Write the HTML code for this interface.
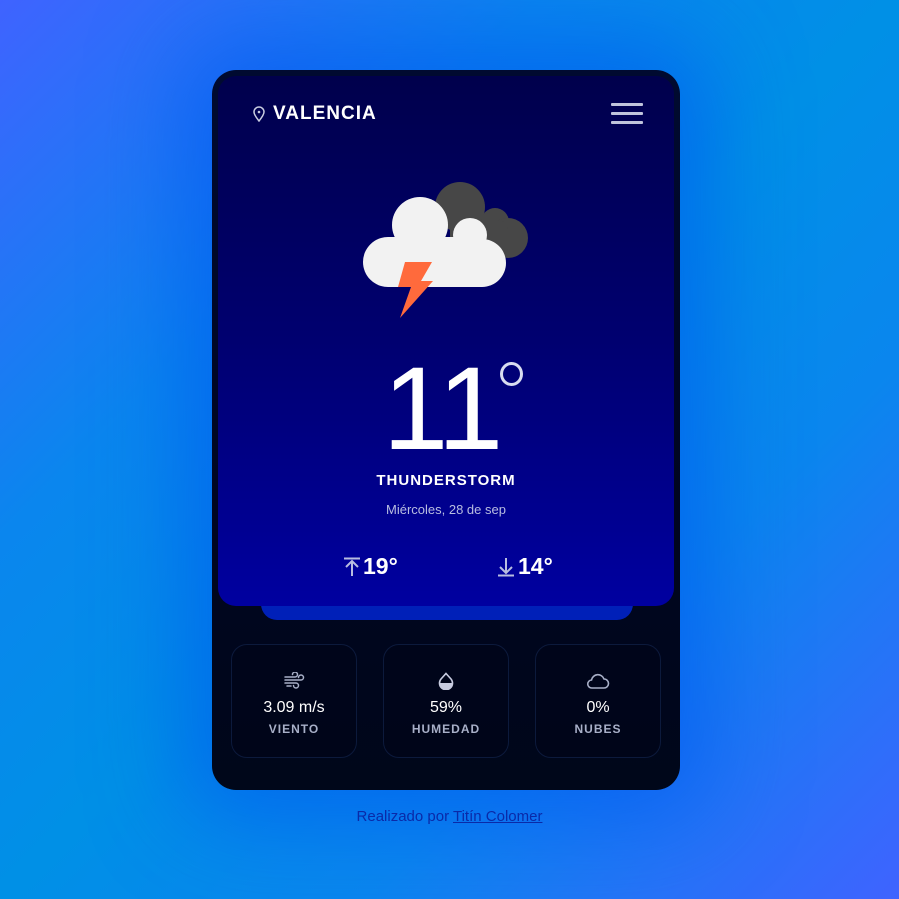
<!DOCTYPE html>
<html><head><meta charset="utf-8"><style>
*{margin:0;padding:0;box-sizing:border-box}
body{width:899px;height:899px;overflow:hidden;font-family:"Liberation Sans",sans-serif;
background:linear-gradient(135deg,#3f63ff 0%,#0a86ee 30%,#0090e6 50%,#0a86ee 70%,#3f63ff 100%);position:relative}
.glow{position:absolute;left:212px;top:70px;width:468px;height:720px;border-radius:24px;box-shadow:0 0 90px 30px rgba(0,80,240,.55)}
.card{position:absolute;left:212px;top:70px;width:468px;height:720px;border-radius:24px;background:linear-gradient(#000a30,#000520 60%,#00071a);overflow:hidden}
.panel{position:absolute;left:6px;top:6px;width:456px;height:530px;border-radius:18px;background:linear-gradient(#00004c 0%,#000070 50%,#0000a0 100%)}
.strip{position:absolute;left:49px;top:530px;width:372px;height:20px;border-radius:0 0 16px 16px;background:#0020b8}
.city{position:absolute;color:#fff;font-size:19px;font-weight:bold;letter-spacing:1px}
.menu{position:absolute;width:32px}
.menu div{height:3px;background:#c0c4dc;margin-bottom:6px;border-radius:1px}
.temp{position:absolute;left:-4px;width:468px;top:280px;text-align:center;color:#fff;font-size:118px;line-height:118px;letter-spacing:-2px}
.deg{position:absolute;left:288px;top:292px;width:23px;height:24px;border:3px solid #d8dcf0;border-radius:50%}
.desc{position:absolute;width:468px;top:402px;text-align:center;color:#fff;font-size:15px;font-weight:bold;letter-spacing:1px}
.date{position:absolute;width:468px;top:432px;text-align:center;color:#b8bde0;font-size:13px}
.mm{position:absolute;top:483px;color:#fff;font-size:23px;font-weight:bold}
.box{position:absolute;top:574px;width:126px;height:114px;border-radius:16px;border:1px solid #0c1a3c;text-align:center;background:rgba(0,5,25,.6)}
.box svg{margin-top:27px}
.v{color:#fff;font-size:16px;margin-top:4px}
.l{color:#a8b0c8;font-size:12px;font-weight:bold;letter-spacing:1px;margin-top:5px}
.foot{position:absolute;top:808px;width:899px;text-align:center;color:#0a2aa8;font-size:15px}
.foot a{color:#0a2aa8}
</style></head><body>
<div class="glow"></div>
<div class="card">
 <div class="strip"></div>
 <div class="panel">
  <svg style="position:absolute;left:34px;top:30px" width="14" height="16" viewBox="0 0 14 16"><path d="M7 15C3 10 2 8 2 6a5 5 0 0 1 10 0c0 2-1 4-5 9z" fill="none" stroke="#c8cce0" stroke-width="1.5"/><circle cx="7" cy="6" r="1.3" fill="#c8cce0"/></svg>
  <div class="city" style="left:55px;top:27px">VALENCIA</div>
  <div class="menu" style="left:393px;top:27px"><div></div><div></div><div></div></div>
 </div>
 <svg style="position:absolute;left:138px;top:105px" width="190" height="150" viewBox="0 0 190 150">
  <g fill="#474747"><circle cx="110" cy="32" r="25"/><circle cx="145" cy="47" r="14"/><circle cx="158" cy="63" r="20"/><rect x="100" y="45" width="58" height="38" rx="10"/></g>
  <g fill="#f2f2f2"><circle cx="70" cy="50" r="28"/><circle cx="38" cy="87" r="25"/><circle cx="120" cy="60" r="17"/><circle cx="132" cy="88" r="24"/><rect x="38" y="62" width="94" height="50"/></g>
  <path d="M55 87 H82 L71 106 H83 L50 143 L61 112 H48 Z" fill="#ff6a3c"/>
 </svg>
 <div class="temp">11</div>
 <div class="deg"></div>
 <div class="desc">THUNDERSTORM</div>
 <div class="date">Miércoles, 28 de sep</div>
 <svg style="position:absolute;left:131px;top:487px" width="18" height="20" viewBox="0 0 18 20"><path d="M1 1.5h16M9 4v15M3 10l6-6 6 6" fill="none" stroke="#b8bde0" stroke-width="2"/></svg>
 <div class="mm" style="left:151px">19°</div>
 <svg style="position:absolute;left:285px;top:487px" width="18" height="20" viewBox="0 0 18 20"><path d="M1 18.5h16M9 1v15M3 10l6 6 6-6" fill="none" stroke="#b8bde0" stroke-width="2"/></svg>
 <div class="mm" style="left:306px">14°</div>
 <div class="box" style="left:19px"><svg width="22" height="18" viewBox="0 0 22 18"><path d="M2 5h10a2.5 2.5 0 1 0-2.5-2.5M2 8h16a2.5 2.5 0 1 0-2.5-2.5M2 11h11a2.5 2.5 0 1 1-2.5 2.5M4 14h4" fill="none" stroke="#a8b0c8" stroke-width="1.5" stroke-linecap="round"/></svg><div class="v">3.09 m/s</div><div class="l">VIENTO</div></div>
 <div class="box" style="left:171px"><svg width="18" height="18" viewBox="0 0 18 18"><path d="M9 1.5l5 5.5a6.5 6.5 0 1 1-10 0z" fill="none" stroke="#c8cce0" stroke-width="1.6"/><path d="M2.5 11h13a6.5 6.5 0 0 1-13 0z" fill="#c8cce0"/></svg><div class="v">59%</div><div class="l">HUMEDAD</div></div>
 <div class="box" style="left:323px"><svg width="24" height="18" viewBox="0 0 24 18"><path d="M6 16h12a4.5 4.5 0 0 0 0-9a6.5 6.5 0 0 0-12.5 1A4 4 0 0 0 6 16z" fill="none" stroke="#a8b0c8" stroke-width="1.6"/></svg><div class="v">0%</div><div class="l">NUBES</div></div>
</div>
<div class="foot">Realizado por <a href="#">Titín Colomer</a></div>
</body></html>
